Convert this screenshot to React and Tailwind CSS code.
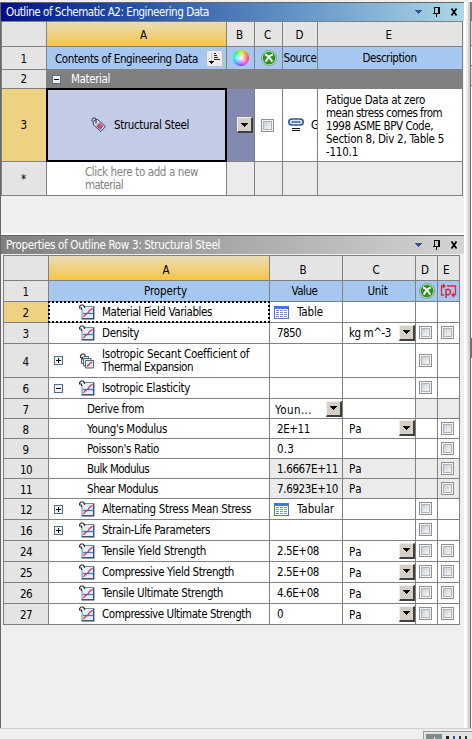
import { useLayoutEffect, useRef } from "react";

// Text run whose tracking is computed so that it spans w pixels.
function T({ w, children, className = "" }) {
  const ref = useRef(null);
  useLayoutEffect(() => {
    const el = ref.current;
    el.style.letterSpacing = "0px";
    const n = el.textContent.length;
    el.style.letterSpacing = (w - el.getBoundingClientRect().width) / n + "px";
  }, [w]);
  return <span ref={ref} className={"inline-block whitespace-pre " + className}>{children}</span>;
}

function Controls() {
  return (
    <svg width="43" height="12" viewBox="0 0 43 12" shapeRendering="crispEdges" className="shrink-0">
      <path d="M0 4h7v1H0zM1 5h5v1H1zM2 6h3v1H2zM3 7h1v1H3z" fill="#3a4f9a" />
      <path d="M19 1h6v1h-6zM19 1h1v6h-1zM23 1h2v6h-2zM18 7h7v1h-7zM21 8h1v3h-1z" fill="#000" />
      <path d="M36.500 2.500l5 7M41.500 2.500l-5 7" stroke="#000" strokeWidth="1.700" shapeRendering="auto" />
    </svg>
  );
}

function Sort() {
  return (
    <span className="flex size-[17px] shrink-0 items-center justify-center rounded-[2px] border border-[#c0c0c0] bg-[#ececec]">
      <svg width="12" height="13" viewBox="0 0 12 13" shapeRendering="crispEdges">
        <path d="M5 1h2v1H5zM5 3h3v1H5zM5 5h4v1H5zM5 7h6v1H5z" fill="#222" />
        <path d="M2 1h1v9H2z" fill="#c4c4c4" />
        <path d="M0 9h5v1H0zM1 10h3v1H1zM2 11h1v1H2z" fill="#111" />
      </svg>
    </span>
  );
}

function Wheel() {
  return <span className="size-[16px] rounded-full bg-[radial-gradient(circle,#fff_5%,rgba(255,255,255,0)_75%),conic-gradient(#b0f000,#ff8000,#ff2040,#ff30d0,#7020ff,#2090ff,#00f0e0,#00f060,#b0f000)]" />;
}

function GreenX() {
  return (
    <svg width="16" height="16" viewBox="0 0 16 16">
      <circle cx="8" cy="8" r="7.4" fill="#d8ead6" stroke="#6d9a70" strokeWidth=".9" />
      <circle cx="8" cy="8" r="6.3" fill="#28951f" />
      <path d="M4 4.6c2 .2 5.200 4 7.300 7M11.800 4.300C9 5.500 6.200 8.500 4.800 11.600" stroke="#fff" strokeWidth="2" fill="none" />
    </svg>
  );
}

function Param() {
  return (
    <svg width="17" height="17" viewBox="0 0 17 17" fill="none" stroke="#d92b3c" strokeWidth="1.3">
      <path d="M4 3H1.500v9H4M3 1l2 2-2 2M7 3h8.500v9M15.500 12H12M14 10l-2 2 2 2" />
      <path d="M6 6v9M6 7.500c1-2 4.500-1.500 4.500 1.500s-3.500 3.500-4.500 1.500" strokeWidth="1.600" />
    </svg>
  );
}

function Tag() {
  return (
    <svg width="16" height="16" viewBox="0 0 16 16">
      <path d="M2 4.500L6 2l8.500 7.500-4.500 5L2.500 8z" fill="#c7d4e6" stroke="#3c4a66" />
      <path d="M5 6.500V2C4.500.5 1.500.5 1 2.500v2" fill="none" stroke="#333" />
      <path d="M8.500 5.800l3.800 3.400-3 3.400-3.800-3.400z" fill="#bd3554" />
      <path d="M7.500 7l3.600 3.300M9.700 6.600l-3 3.600M11 8l-3 3.500" stroke="#e599ac" strokeWidth=".5" />
    </svg>
  );
}

function Link() {
  return (
    <svg width="16" height="14" viewBox="0 0 16 14">
      <rect x=".8" y="1" width="14.400" height="6" rx="3" fill="#d5e2f3" stroke="#2c5292" strokeWidth="1.500" />
      <path d="M3.500 4h9" stroke="#2c5292" strokeWidth="1.300" />
      <path d="M6 1.500v1.500M10 1.500v1.500M6 5v1.500M10 5v1.500" stroke="#fff" strokeWidth=".7" />
      <path d="M4 10h8v1H4zM4 12h8v1H4z" fill="#111" />
    </svg>
  );
}

function Hook() {
  return <path d="M3.500 6.500V4.500H1.500v-2L3 1h2l1 1.500V4" fill="none" stroke="#333" strokeWidth="1.100" />;
}

function Prop() {
  return (
    <svg width="16" height="16" viewBox="0 0 16 16" className="shrink-0">
      <path d="M3 2.500H14.500V14.500H3z" fill="#e3edf7" stroke="#7388a1" />
      <path d="M2.500 14.800h12.300V2.500" fill="none" stroke="#30455f" strokeWidth="1.200" />
      <path d="M4 9.500h10" stroke="#2687e8" strokeWidth="1.300" />
      <path d="M4.500 12.800l2-2.300 2.500-1.500 1.500-2.500 3-2.300" fill="none" stroke="#d63243" strokeWidth="1.200" />
      <path d="M0 0h4.500v5H0z" fill="#fff" />
      <path d="M2.500 6V4H.5V2.500L2 1h2l1.500 1.500V4" fill="none" stroke="#333" strokeWidth="1.200" />
    </svg>
  );
}

function PropStack() {
  return (
    <svg width="16" height="16" viewBox="0 0 16 16" className="shrink-0">
      <g fill="#dfe9f2" stroke="#53687f">
        <path d="M2.500 3.500h7v7h-7z" /><path d="M4.500 5.500h7.500v7.500H4.500z" /><path d="M6.500 7.500h8v7.500h-8z" />
      </g>
      <path d="M8 13.500l2-2 1-1 2-1.500" stroke="#d63243" strokeWidth="1.300" fill="none" />
      <path d="M.5 1h4v3H.5z" fill="#fff" />
      <Hook />
    </svg>
  );
}

function Grid() {
  return (
    <svg width="15" height="13" viewBox="0 0 15 13" shapeRendering="crispEdges" className="shrink-0">
      <path d="M0 0h15v13H0z" fill="#5279bc" />
      <path d="M1 3h13v9H1z" fill="#fff" />
      <path d="M0 0h15v3H0z" fill="#3f78dc" />
      <path d="M2 4h3v1H2zM6 4h3v1H6zM10 4h3v1h-3zM2 6h3v1H2zM6 6h3v1H6zM10 6h3v1h-3zM2 8h3v1H2zM6 8h3v1H6zM10 8h3v1h-3zM2 10h3v1H2zM6 10h3v1H6zM10 10h3v1h-3z" fill="#7a93b8" />
    </svg>
  );
}

function Check() {
  return <span className="flex size-[13px] items-center justify-center border border-[#8e8f8f] bg-[#f4f4f4]"><span className="size-[9px] border border-[#aeb3b9] bg-linear-to-br from-[#cbcfd5] to-[#f6f6f6]" /></span>;
}

function Drop() {
  return (
    <span className="flex h-[16px] w-[16px] shrink-0 items-center justify-center border-t border-l border-r-2 border-b-2 border-t-[#f0eee8] border-l-[#f0eee8] border-r-[#404040] border-b-[#404040] bg-[#d4d0c8]">
      <svg width="7" height="4" viewBox="0 0 7 4" shapeRendering="crispEdges"><path d="M0 0h7v1H0zM1 1h5v1H1zM2 2h3v1H2zM3 3h1v1H3z" /></svg>
    </span>
  );
}

function Toggle({ open }) {
  return (
    <svg width="9" height="9" viewBox="0 0 9 9" shapeRendering="crispEdges" className="shrink-0">
      <path d="M0 0h9v9H0z" fill="#4f6f92" />
      <path d="M1 1h7v7H1z" fill="#f1f1ee" />
      <path d={open ? "M2 4h5v1H2z" : "M2 4h5v1H2zM4 2h1v5H4z"} fill="#000" />
    </svg>
  );
}

const center = "flex items-center justify-center ";
const head = center + "bg-[#e4e4e4]";
const gold = center + "bg-linear-to-b from-[#e9dcb4] to-[#f5c53e]";
const blue = center + "bg-[#a6c8f0]";

const rows = [
  { n: 2, nw: 7, t: "Material Field Variables", w: 110, icon: 1, v: "Table", vw: 26, grid: 1, sel: 1 },
  { n: 3, nw: 7, t: "Density", w: 37, icon: 1, v: "7850", vw: 24, u: "kg m^-3", uw: 42, dd: 1, d: 1, e: 1 },
  { n: 4, nw: 7, t: "Isotropic Secant Coefficient of", w: 147, t2: "Thermal Expansion", w2: 91, icon: 2, tog: "+", d: 1 },
  { n: 6, nw: 7, t: "Isotropic Elasticity", w: 88, icon: 1, tog: "-", d: 1 },
  { n: 7, nw: 7, t: "Derive from", w: 57, v: "Youn...", vw: 37, vd: 1, dg: 1, eg: 1 },
  { n: 8, nw: 7, t: "Young's Modulus", w: 80, v: "2E+11", vw: 33, u: "Pa", uw: 13, dd: 1, e: 1 },
  { n: 9, nw: 7, t: "Poisson's Ratio", w: 72, v: "0.3", vw: 17, e: 1 },
  { n: 10, nw: 12, t: "Bulk Modulus", w: 62, v: "1.6667E+11", vw: 61, u: "Pa", uw: 13, gray: 1, dg: 1, e: 1, eg: 1 },
  { n: 11, nw: 12, t: "Shear Modulus", w: 71, v: "7.6923E+10", vw: 61, u: "Pa", uw: 13, gray: 1, dg: 1, e: 1, eg: 1 },
  { n: 12, nw: 12, t: "Alternating Stress Mean Stress", w: 149, icon: 1, tog: "+", v: "Tabular", vw: 37, grid: 1, d: 1 },
  { n: 16, nw: 12, t: "Strain-Life Parameters", w: 108, icon: 1, tog: "+", d: 1 },
  { n: 24, nw: 12, t: "Tensile Yield Strength", w: 104, icon: 1, v: "2.5E+08", vw: 42, u: "Pa", uw: 13, dd: 1, d: 1, e: 1 },
  { n: 25, nw: 12, t: "Compressive Yield Strength", w: 132, icon: 1, v: "2.5E+08", vw: 42, u: "Pa", uw: 13, dd: 1, d: 1, e: 1 },
  { n: 26, nw: 12, t: "Tensile Ultimate Strength", w: 121, icon: 1, v: "4.6E+08", vw: 42, u: "Pa", uw: 13, dd: 1, d: 1, e: 1 },
  { n: 27, nw: 12, t: "Compressive Ultimate Strength", w: 149, icon: 1, v: "0", vw: 7, u: "Pa", uw: 13, dd: 1, d: 1, e: 1 },
];

function Row({ r }) {
  const bg = r.gray ? "bg-[#ebebeb]" : "bg-white";
  return (
    <>
      <div className={center + "pt-[2px] " + (r.sel ? "bg-[#efd281]" : "bg-[#e4e4e4]")}><T w={r.nw}>{String(r.n)}</T></div>
      <div className="relative flex items-center bg-white">
        {r.sel && <span className="absolute -inset-px border-2 border-dotted border-black" />}
        {r.icon ? (
          <>
            <span className="ml-[5px] flex w-[25px]">{r.tog && <Toggle open={r.tog === "-"} />}</span>
            {r.icon === 2 ? <PropStack /> : <Prop />}
            <span className="ml-[7px] flex flex-col items-start leading-[13px]"><T w={r.w}>{r.t}</T>{r.t2 && <T w={r.w2}>{r.t2}</T>}</span>
          </>
        ) : <T w={r.w} className="ml-[38px]">{r.t}</T>}
      </div>
      <div className={"flex items-center overflow-hidden " + bg}>
        {r.grid ? <><span className="ml-[4px] flex"><Grid /></span><T w={r.vw} className="ml-[8px]">{r.v}</T></> : r.v && <T w={r.vw} className={r.vd ? "ml-[5px] pt-[2px]" : "ml-[7px]"}>{r.v}</T>}
        {r.vd && <span className="ml-auto"><Drop /></span>}
      </div>
      <div className={"flex items-center overflow-hidden " + bg}>
        {r.u && <T w={r.uw} className={r.uw === 13 ? "ml-[6px] pt-px" : "ml-[6px]"}>{r.u}</T>}
        {r.dd && <span className="ml-auto pb-px"><Drop /></span>}
      </div>
      <div className={center + "pr-[2px] pb-px " + (r.dg ? "bg-[#ebebeb]" : "bg-white")}>{r.d && <Check />}</div>
      <div className={center + "pr-[2px] pb-px " + (r.eg ? "bg-[#ebebeb]" : "bg-white")}>{r.e && <Check />}</div>
    </>
  );
}

function Outline() {
  return (
    <section className="h-[235px]">
      <div className="flex h-[19px] w-[463px] items-center border-t border-[#666] bg-linear-to-r from-[#080b86] to-[#add8e6] pr-[6px] pl-[5px] text-white">
        <T w={203}>Outline of Schematic A2: Engineering Data</T>
        <span className="ml-auto"><Controls /></span>
      </div>
      <div className="grid w-[462px] grid-cols-[44px_179px_27px_27px_34px_144px] grid-rows-[24px_22px_18px_72px_33px] gap-px border border-[#808080] bg-[#808080]">
        <div className={head} /><div className={gold + " pl-[15px] pt-[2px]"}><T w={8}>A</T></div>
        {["B", "C", "D", "E"].map((c) => <div key={c} className={head + " pt-[2px] pr-[1px]"}><T w={8}>{c}</T></div>)}
        <div className={head + " pt-[2px]"}><T w={7}>1</T></div>
        <div className="flex items-center bg-[#a6c8f0] pr-[3px] pl-[8px]"><T w={143} className="pt-[2px]">Contents of Engineering Data</T><span className="ml-auto"><Sort /></span></div>
        <div className={blue}><Wheel /></div><div className={blue}><GreenX /></div>
        <div className={blue}><T w={33}>Source</T></div><div className={blue + " pr-[1px]"}><T w={54}>Description</T></div>
        <div className={head}><T w={7}>2</T></div>
        <div className="col-span-5 flex items-center bg-[#808080] pl-[5px] text-white"><Toggle open /><T w={39} className="ml-[10px]">Material</T></div>
        <div className={center + "bg-[#efd281]"}><T w={7}>3</T></div>
        <div className="relative flex items-center bg-[#c3cce7] pl-[44px]">
          <span className="absolute -inset-px border-2 border-black" /><Tag /><T w={75} className="ml-[7px]">Structural Steel</T>
        </div>
        <div className="flex items-center justify-end bg-[#838ab1] pr-[1px]"><Drop /></div>
        <div className={center + "bg-white pr-[2px]"}><Check /></div>
        <div className="flex items-center overflow-hidden bg-white pl-[5px]"><span className="shrink-0"><Link /></span><span className="ml-[7px]">G</span></div>
        <div className="flex flex-col items-start justify-center bg-white pt-[2px] pl-[8px] leading-[13px]">
          <T w={99}>Fatigue Data at zero</T><T w={116}>mean stress comes from</T><T w={107}>1998 ASME BPV Code,</T><T w={118}>Section 8, Div 2, Table 5</T><T w={32}>-110.1</T>
        </div>
        <div className={head}><T w={6}>*</T></div>
        <div className="flex flex-col items-start justify-center bg-white pl-[38px] leading-[13px] text-[#828282]"><T w={113}>Click here to add a new</T><T w={38}>material</T></div>
        <div className="bg-[#ebebeb]" /><div className="bg-[#ebebeb]" /><div className="bg-[#ebebeb]" /><div className="bg-[#ebebeb]" />
      </div>
    </section>
  );
}

function Properties() {
  return (
    <section>
      <div className="flex h-[19px] w-[463px] items-center border-t border-[#666] bg-linear-to-r from-[#808080] to-[#d4d4d4] pr-[6px] pl-[5px] text-white">
        <T w={214}>Properties of Outline Row 3: Structural Steel</T><span className="ml-auto"><Controls /></span>
      </div>
      <div className="mt-[1px] ml-[2px] grid w-[457px] grid-cols-[44px_220px_72px_72px_21px_21px] grid-rows-[24px_20px_20px_20px_33px_20px_19px_19px_19px_19px_19px_20px_20px_20px_20px_20px_20px] gap-px border border-[#808080] bg-[#808080]">
        <div className={head} /><div className={gold + " pl-[15px] pt-[3px]"}><T w={8}>A</T></div>
        {["B", "C", "D", "E"].map((c, i) => <div key={c} className={head + (i < 2 ? " pt-[3px] pr-[5px]" : " pt-[3px] pr-[3px]")}><T w={8}>{c}</T></div>)}
        <div className={head + " pt-[2px]"}><T w={7}>1</T></div>
        <div className={blue + " pl-[13px]"}><T w={43}>Property</T></div><div className={blue + " pr-[3px]"}><T w={26}>Value</T></div><div className={blue + " pr-[3px]"}><T w={20}>Unit</T></div>
        <div className={blue}><GreenX /></div><div className={blue}><Param /></div>
        {rows.map((r) => <Row key={r.n} r={r} />)}
      </div>
    </section>
  );
}

// Edge of the neighbouring pane that shows on the right of the window.
function Neighbour() {
  return (
    <div className="flex h-full w-[8px] shrink-0">
      <div className="w-[6px] border-r-2 border-l-2 border-r-[#d0d0d0] border-l-white bg-[#efefef]" />
      <div className="flex w-[2px] flex-col border-l border-[#707070] bg-white">
        <div className="h-[19px] bg-[#808080]" /><div className="h-[24px] bg-[#e4e4e4]" /><div className="h-px bg-[#808080]" />
        <div className="h-[19px] bg-white" /><div className="h-px bg-[#808080]" /><div className="h-[19px] bg-[#e4e4e4]" /><div className="h-px bg-[#808080]" />
        <div className="h-[252px] bg-white" /><div className="h-[20px] bg-[#707070]" /><div className="flex-1 bg-[#f0f0f0]" />
      </div>
    </div>
  );
}

export default function App() {
  return (
    <main className="flex h-[739px] w-[472px] flex-col overflow-hidden bg-[#efefef] pt-[2px] font-['DejaVu_Sans_Condensed','DejaVu_Sans',sans-serif] text-[11.5px] leading-[14px] text-black">
      <div className="flex h-[726px]">
        <div className="w-[464px] border-l border-[#666]">
          <Outline />
          <div className="-mt-[4px] h-[2px] bg-white" />
          <Properties />
        </div>
        <Neighbour />
      </div>
      <div className="flex h-[11px] justify-end border-t border-[#d0d0d0] pt-[2px]">
        <div className="flex h-[10px] w-[49px] gap-[4px] overflow-hidden border-t border-l border-[#999] bg-[#e4e4e4] pt-[2px] pl-[2px]">
          <span className="flex h-[10px] w-[16px] shrink-0 justify-center bg-[#7d8a8a]"><span className="mt-[3px] h-[6px] w-px bg-white" /></span>
          <span className="mt-[2px] flex gap-[4px]"><i className="h-2 w-[3px] bg-[#222]" /><i className="h-2 w-[2px] bg-[#35518d]" /><i className="h-2 w-[2px] bg-[#333]" /><i className="h-2 w-[2px] bg-[#333]" /></span>
        </div>
      </div>
    </main>
  );
}
